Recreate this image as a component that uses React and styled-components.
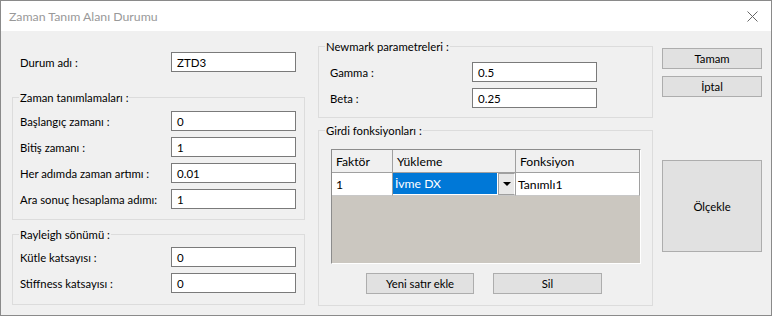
import React from 'react';
import styled, { createGlobalStyle } from 'styled-components';

const GlobalStyle = createGlobalStyle`
  html, body {
    margin: 0;
    padding: 0;
    background: #f0f0f0;
  }
  * {
    box-sizing: border-box;
  }
`;

const FONT = `'Lato', 'Noto Sans', 'Liberation Sans', sans-serif`;

const Window = styled.div`
  width: 772px;
  height: 316px;
  border: 1px solid #8a8a8a;
  display: flex;
  flex-direction: column;
  font-family: ${FONT};
  font-size: 11.3px;
  color: #000;
  background: #f0f0f0;
`;

const TitleBar = styled.div`
  height: 30px;
  flex: none;
  background: #fff;
  display: flex;
  align-items: center;
  justify-content: space-between;
  padding: 0 13px 0 8px;
`;

const Title = styled.span`
  font-size: 12.3px;
  color: #999;
`;

const CloseIcon = styled.svg`
  width: 11px;
  height: 11px;
  display: block;
`;

const Body = styled.div`
  flex: 1;
  display: flex;
  padding-left: 11px;
`;

const Column = styled.div`
  width: ${({ $width }) => $width}px;
  margin-right: ${({ $gap }) => $gap || 0}px;
  padding-top: ${({ $top }) => $top || 0}px;
  display: flex;
  flex-direction: column;
`;

const Group = styled.fieldset`
  margin: ${({ $mt }) => $mt || 0}px 0 0 0;
  padding: 0;
  border: 1px solid #dcdcdc;
  min-width: 0;
`;

const Legend = styled.legend`
  margin-left: 6px;
  padding: 0 1px;
  line-height: 15px;
`;

const GroupBody = styled.div`
  display: flex;
  flex-direction: column;
  gap: 6px;
  padding: ${({ $pt }) => $pt}px 8px ${({ $pb }) => $pb}px ${({ $pl }) => $pl || 7}px;
`;

const Row = styled.div`
  display: flex;
  align-items: center;
  height: 20px;
  padding-left: ${({ $pl }) => $pl || 0}px;
`;

const Label = styled.span`
  width: ${({ $width }) => $width}px;
  flex: none;
  white-space: nowrap;
`;

const TextBox = styled.div`
  width: 125px;
  height: 20px;
  border: 1px solid #7a7a7a;
  background: #fff;
  padding-left: 5px;
  display: flex;
  align-items: center;
  font-size: 11.5px;
`;

const Button = styled.button`
  width: ${({ $width }) => $width}px;
  height: ${({ $height }) => $height || 21}px;
  margin-top: ${({ $mt }) => $mt || 0}px;
  background: #e1e1e1;
  border: 1px solid #adadad;
  font-family: ${FONT};
  font-size: 11.3px;
  color: #000;
  padding: 0;
`;

const Grid = styled.div`
  width: 310px;
  height: 115px;
  border-style: solid;
  border-width: 1px;
  border-color: #8c8c8c #ffffff #ffffff #8c8c8c;
  background: #cbc7c0;
  display: grid;
  grid-template-columns: 61px 123px 124px;
  grid-template-rows: 23px 23px;
  align-content: start;
  font-size: 12.2px;
`;

const HeadCell = styled.div`
  background: #f0f0f0;
  border-right: 1px solid #a0a0a0;
  border-bottom: 1px solid #a0a0a0;
  padding-left: 4px;
  display: flex;
  align-items: center;
`;

const Cell = styled.div`
  background: #fff;
  border-right: 1px solid #a0a0a0;
  border-bottom: 1px solid #c8c8c8;
  padding-left: ${({ $pl }) => ($pl === undefined ? 4 : $pl)}px;
  display: flex;
  align-items: center;
`;

const ComboValue = styled.div`
  width: 104px;
  height: 21px;
  background: #0078d7;
  color: #fff;
  display: flex;
  align-items: center;
  padding-left: 2px;
  align-self: flex-start;
`;

const ComboArrow = styled.div`
  width: 17px;
  height: 22px;
  margin-left: 1px;
  align-self: flex-start;
  background: #e8e8e8;
  border: 1px solid #a0a0a0;
  border-right-color: #fff;
  display: flex;
  align-items: center;
  justify-content: center;
  &::after {
    content: '';
    border-left: 4px solid transparent;
    border-right: 4px solid transparent;
    border-top: 4px solid #000;
  }
`;

const ButtonRow = styled.div`
  display: flex;
  justify-content: center;
  gap: 19px;
  margin-top: 3px;
  padding-right: 7px;
`;

const fields = [
  { label: 'Başlangıç zamanı :', value: '0' },
  { label: 'Bitiş zamanı :', value: '1' },
  { label: 'Her adımda zaman artımı  :', value: '0.01' },
  { label: 'Ara sonuç hesaplama adımı:', value: '1' },
];

const rayleigh = [
  { label: 'Kütle katsayısı :', value: '0' },
  { label: 'Stiffness katsayısı :', value: '0' },
];

const App = () => {
  return (
    <>
      <GlobalStyle />
      <Window>
        <TitleBar>
          <Title>Zaman Tanım Alanı Durumu</Title>
          <CloseIcon viewBox="0 0 11 11">
            <path d="M0.5 0.5 L10.5 10.5 M10.5 0.5 L0.5 10.5" stroke="#666" strokeWidth="1" fill="none" />
          </CloseIcon>
        </TitleBar>
        <Body>
          <Column $width={293} $gap={13} $top={21}>
            <Row $pl={8}>
              <Label $width={151}>Durum adı :</Label>
              <TextBox>ZTD3</TextBox>
            </Row>
            <Group $mt={18}>
              <Legend>Zaman tanımlamaları :</Legend>
              <GroupBody $pt={6} $pb={10}>
                {fields.map((f) => (
                  <Row key={f.label}>
                    <Label $width={151}>{f.label}</Label>
                    <TextBox>{f.value}</TextBox>
                  </Row>
                ))}
              </GroupBody>
            </Group>
            <Group $mt={7}>
              <Legend>Rayleigh sönümü :</Legend>
              <GroupBody $pt={5} $pb={11}>
                {rayleigh.map((f) => (
                  <Row key={f.label}>
                    <Label $width={151}>{f.label}</Label>
                    <TextBox>{f.value}</TextBox>
                  </Row>
                ))}
              </GroupBody>
            </Group>
          </Column>

          <Column $width={335} $gap={9} $top={8}>
            <Group>
              <Legend>Newmark parametreleri :</Legend>
              <GroupBody $pt={8} $pb={9} $pl={11}>
                <Row>
                  <Label $width={142}>Gamma :</Label>
                  <TextBox>0.5</TextBox>
                </Row>
                <Row>
                  <Label $width={142}>Beta :</Label>
                  <TextBox>0.25</TextBox>
                </Row>
              </GroupBody>
            </Group>
            <Group $mt={5}>
              <Legend>Girdi fonksiyonları :</Legend>
              <GroupBody $pt={11} $pb={11} $pl={12}>
                <Grid>
                  <HeadCell>Faktör</HeadCell>
                  <HeadCell>Yükleme</HeadCell>
                  <HeadCell>Fonksiyon</HeadCell>
                  <Cell>1</Cell>
                  <Cell $pl={0}>
                    <ComboValue>İvme DX</ComboValue>
                    <ComboArrow />
                  </Cell>
                  <Cell $pl={2}>Tanımlı1</Cell>
                </Grid>
                <ButtonRow>
                  <Button $width={108}>Yeni satır ekle</Button>
                  <Button $width={109}>Sil</Button>
                </ButtonRow>
              </GroupBody>
            </Group>
          </Column>

          <Column $width={100} $top={17}>
            <Button $width={100}>Tamam</Button>
            <Button $width={100} $mt={7}>İptal</Button>
            <Button $width={100} $height={92} $mt={63}>Ölçekle</Button>
          </Column>
        </Body>
      </Window>
    </>
  );
};

export default App;
